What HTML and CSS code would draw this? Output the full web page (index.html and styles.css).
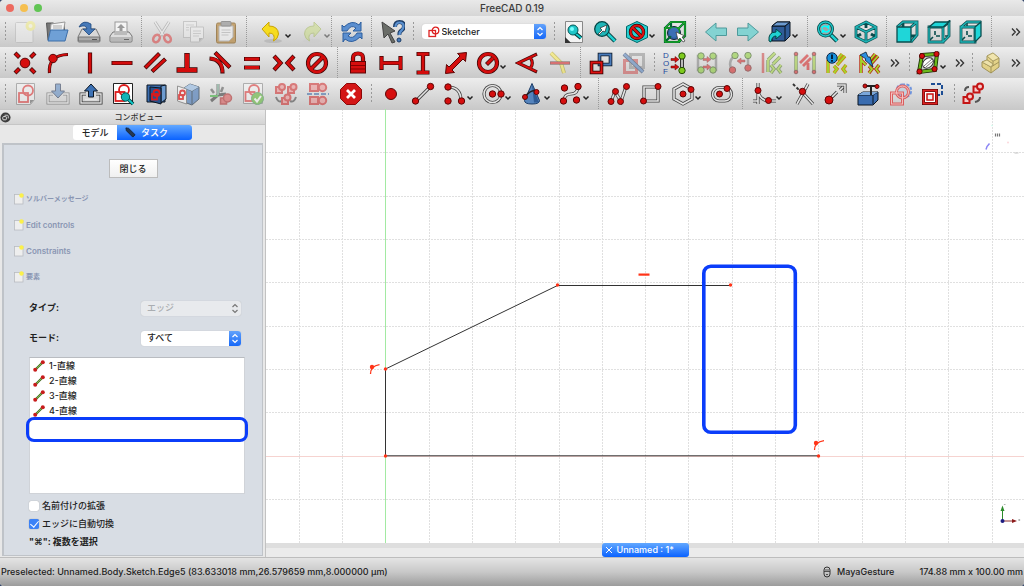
FILE: index.html
```html
<!DOCTYPE html>
<html lang="ja">
<head>
<meta charset="utf-8">
<title>FreeCAD 0.19</title>
<link rel="stylesheet" href="styles.css">
</head>
<body>
<svg class="sprite" aria-hidden="true">
  <symbol id="chev" viewBox="0 0 8 24"><path d="M1.500 14.500 4 17l2.500-2.500" fill="none" stroke="#222" stroke-width="1.500"/></symbol>
  <symbol id="more" viewBox="0 0 10 10"><path d="M1 1.500 4.300 5 1 8.500M5.300 1.500 8.600 5 5.300 8.500" fill="none" stroke="#333" stroke-width="1.300"/></symbol>
  <symbol id="step" viewBox="0 0 12 14"><path d="M3.500 5.500 6 3l2.500 2.500M3.500 8.500 6 11l2.500-2.500" fill="none" stroke="currentColor" stroke-width="1.200"/></symbol>
  <symbol id="page" viewBox="0 0 10 12"><rect x=".5" y="1.500" width="8.500" height="9.500" fill="#eee" stroke="#b9bcc0" stroke-width=".8"/><circle cx="7.500" cy="2.500" r="2.200" fill="#fbf04a"/></symbol>
  <symbol id="edge" viewBox="0 0 12 12"><path d="M2 10 10 2" stroke="#3f6b1c" stroke-width="2.200"/><path d="M2 10 10 2" stroke="#82b84a" stroke-width="1"/><circle cx="2.200" cy="9.800" r="2" fill="#c81c1c"/><circle cx="9.800" cy="2.200" r="2" fill="#c81c1c"/></symbol>
</svg>
<div class="window">
<header class="titlebar">
  <div class="lights"><span class="light close"></span><span class="light min"></span><span class="light max"></span></div>
  <h1 class="title">FreeCAD 0.19</h1>
</header>

<nav class="toolbar bar-file" aria-label="File and view">
  <div class="group grip">
    <button class="tool off" aria-label="New"><svg viewBox="0 0 24 24"><rect x="2.500" y="2.500" width="17.500" height="20" rx="1" fill="#f0f0f0" stroke="#b5b5b5"/><circle cx="17.500" cy="6" r="5" fill="#f5ef7a"/><circle cx="17.500" cy="6" r="2" fill="#fffde0"/></svg></button>
    <button class="tool" aria-label="Open"><svg viewBox="0 0 24 24"><path d="M1.500 3h7l1 2h10v15H3z" fill="#777" stroke="#555"/><path d="M6 4l14-2-2 12H5z" fill="#f4f4f4" stroke="#999"/><path d="M8 6h9M8 8h9" stroke="#aaa"/><path d="M5.500 10H23l-3 11H3z" fill="#6fa0d6" stroke="#3d6ea8"/></svg></button>
    <button class="tool" aria-label="Save"><svg viewBox="0 0 24 24"><path d="M5 9h14l4 8v4q0 1-1 1H2q-1 0-1-1v-4z" fill="#d8d8d8" stroke="#777"/><path d="M1.500 17h21v4h-21z" fill="#aaa" stroke="#777"/><path d="M15 19.500h5" stroke="#555"/><path d="M2 7Q6-1 14 4v5h4l-6 6-6-6h4Q9 4 2 7z" fill="#4679b8" stroke="#20497e" stroke-width=".8"/></svg></button>
    <button class="tool" aria-label="Print"><svg viewBox="0 0 24 24"><rect x="6" y="2" width="12" height="13" fill="#f4f4f4" stroke="#999"/><path d="M12 4l4 4h-2.500v5h-3V8H8z" fill="#999"/><path d="M4 12h16l3 4v5q0 1-1 1H2q-1 0-1-1v-5z" fill="#ddd" stroke="#777"/><path d="M6 11h12v4H5z" fill="#bbb"/><path d="M2 17h20v4H2z" fill="#b8b8b8"/><path d="M15 19.500h5" stroke="#666"/></svg></button>
  </div>
  <div class="group sep">
    <button class="tool off" aria-label="Cut"><svg viewBox="0 0 24 24"><path d="M5 2l9 14M19 2l-9 14" stroke="#888" stroke-width="3"/><path d="M5 2l9 14M19 2l-9 14" stroke="#eee" stroke-width="1.500"/><ellipse cx="6.500" cy="18.500" rx="3" ry="4" transform="rotate(35 6.500 18.500)" fill="none" stroke="#d33" stroke-width="2.500"/><ellipse cx="17.500" cy="18.500" rx="3" ry="4" transform="rotate(-35 17.500 18.500)" fill="none" stroke="#d33" stroke-width="2.500"/></svg></button>
    <button class="tool off" aria-label="Copy"><svg viewBox="0 0 24 24"><rect x="1.500" y="1.500" width="13" height="16" fill="#eee" stroke="#aaa"/><path d="M8.500 7h13v11l-4 4h-9z" fill="#f2f2f2" stroke="#aaa"/><path d="M11 11h8M11 13.500h8M11 16h6M4 5h8M4 7.500h3M4 10h3" stroke="#bbb"/><path d="M21 18h-4v4z" fill="#999"/></svg></button>
    <button class="tool dim" aria-label="Paste"><svg viewBox="0 0 24 24"><rect x="2.500" y="3" width="19" height="20" rx="1.500" fill="#b98d4a" stroke="#8a6428"/><path d="M5 6h14v11l-4 4H5z" fill="#eee" stroke="#aaa"/><path d="M7.500 10h9M7.500 12.500h9M7.500 15h7" stroke="#bbb"/><rect x="7" y="1.500" width="10" height="4.500" rx="1" fill="#999" stroke="#777"/></svg></button>
  </div>
  <div class="group sep late">
    <button class="tool menu" aria-label="Undo"><svg viewBox="0 0 24 24"><ellipse cx="12" cy="21" rx="9" ry="2" fill="#bbb"/><path d="M1 9l7-7v4q9 0 9.500 8-.5 5-5 7 2.500-8-4.500-8v4z" fill="#f6dc1e" stroke="#c9a406"/></svg><svg class="chev"><use href="#chev"/></svg></button>
    <button class="tool menu off" aria-label="Redo"><svg viewBox="0 0 24 24"><ellipse cx="12" cy="21" rx="9" ry="2" fill="#ccc"/><path d="M21 9l-7-7v4q-9 0-9.500 8 .5 5 5 7-2.500-8 4.500-8v4z" fill="#c8dc7c" stroke="#9fb552"/></svg><svg class="chev"><use href="#chev"/></svg></button>
  </div>
  <div class="group sep">
    <button class="tool" aria-label="Refresh"><svg viewBox="0 0 24 24"><path d="M2 11V5l2 2q8-8 15-2l2-3v9h-8l3-3q-5-4-9 3z" fill="#5b8fd0" stroke="#2d5e9e"/><path d="M22 13v6l-2-2q-8 8-15 2l-2 3v-9h8l-3 3q5 4 9-3z" fill="#5b8fd0" stroke="#2d5e9e"/></svg></button>
  </div>
  <div class="group sep">
    <button class="tool" aria-label="What's this?"><svg viewBox="0 0 24 24"><path d="M14 7q0-5 4.500-5T23 6q0 3-2.500 4.500T18.500 15" fill="none" stroke="#1c3c66" stroke-width="4"/><path d="M14.500 7q0-4.500 4-4.500T22.500 6q0 3-2 4.500T18.500 15" fill="none" stroke="#5b90cf" stroke-width="2.200"/><circle cx="18" cy="20" r="2" fill="#4679b8" stroke="#1c3c66"/><path d="M1 2l13 9-5 2 5 9-3 1-4-9-4 4z" fill="#6a6d68" stroke="#444"/></svg></button>
  </div>
  <div class="group grip">
    <label class="combo workbench"><svg class="combo-icon" viewBox="0 0 12 12"><rect x="1" y="4.500" width="6.500" height="6" fill="none" stroke="#d22" stroke-width="1.300"/><circle cx="7.500" cy="4.500" r="3.300" fill="none" stroke="#d22" stroke-width="1.300"/></svg><select aria-label="Workbench"><option>Sketcher</option></select><svg class="step"><use href="#step"/></svg></label>
  </div>
  <div class="group grip">
    <button class="tool" aria-label="Fit all"><svg viewBox="0 0 24 24"><path d="M3.500 1.500h17v21H8l-4.500-4z" fill="#f3f3f3" stroke="#888"/><path d="M3 17v6h6z" fill="#333"/><path d="M13 13l6 5" stroke="#033" stroke-width="4"/><path d="M13 13l6 5" stroke="#1cc" stroke-width="2"/><circle cx="11" cy="10" r="5" fill="#1fc6c8" stroke="#055"/><circle cx="10" cy="9" r="2" fill="#7ff"/></svg></button>
    <button class="tool" aria-label="Zoom to selection"><svg viewBox="0 0 24 24"><path d="M14 13l8 8" stroke="#033" stroke-width="4.500"/><path d="M14 13l8 8" stroke="#1fcfd0" stroke-width="2.500"/><circle cx="9" cy="9" r="7.300" fill="#1fb6b8" stroke="#044" stroke-width="1.300"/><path d="M5 14l4-4-2-2 7-3-2 7-2-1-4 4z" fill="#fff" stroke="#222" stroke-width=".7"/></svg></button>
    <button class="tool menu" aria-label="Draw style"><svg viewBox="0 0 24 24"><path d="M12 1.500l10.500 5v11l-10.500 5-10.500-5v-11z" fill="#27cfd1" stroke="#066"/><circle cx="12" cy="12" r="6.500" fill="none" stroke="#300" stroke-width="3.400"/><path d="M7.500 7.500l9 9" stroke="#300" stroke-width="3.400"/><circle cx="12" cy="12" r="6.500" fill="none" stroke="#d11" stroke-width="2.200"/><path d="M7.500 7.500l9 9" stroke="#d11" stroke-width="2.200"/></svg><svg class="chev"><use href="#chev"/></svg></button>
    <button class="tool" aria-label="Box selection"><svg viewBox="0 0 24 24"><circle cx="11" cy="13" r="6.500" fill="#2f62a8" stroke="#123"/><path d="M2 8h14v14H2zM2 8l6-6h14v14l-6 6M16 8l6-6M8 2v14h14M8 16l-6 6" fill="none" stroke="#063" stroke-width="2.200"/><path d="M2 8h14v14H2zM2 8l6-6h14v14l-6 6M16 8l6-6" fill="none" stroke="#2b2" stroke-width="1"/><circle cx="11" cy="12.500" r="5" fill="#3c6fb4"/><path d="M13 12l9 4-3 1 3 4-2 1-3-4-2 2z" fill="#fff" stroke="#333" stroke-width=".7"/></svg></button>
  </div>
  <div class="group sep">
    <button class="tool" aria-label="Back"><svg viewBox="0 0 24 24"><path d="M1.500 12L12 3v5h10.500v7.500H12v5.500z" fill="#83d3d2" stroke="#4e9a9b"/></svg></button>
    <button class="tool" aria-label="Forward"><svg viewBox="0 0 24 24"><path d="M22.500 12L12 3v5H1.500v7.500H12v5.500z" fill="#83d3d2" stroke="#4e9a9b"/></svg></button>
    <button class="tool menu" aria-label="Linked object"><svg viewBox="0 0 24 24"><path d="M4 6l5-4h13v14l-5 5H4z" fill="#2f5c98" stroke="#0b1521"/><path d="M4 6h13v15M17 6l5-4" fill="none" stroke="#0b1521"/><path d="M4 6l5-4h13l-5 4z" fill="#6d9bd0" stroke="#0b1521"/><path d="M1 21q-1-9 7-9V9l6 5-6 5v-3q-4 0-5 6z" fill="#1fd0d2" stroke="#044"/></svg><svg class="chev"><use href="#chev"/></svg></button>
  </div>
  <div class="group sep">
    <button class="tool menu" aria-label="Sync view"><svg viewBox="0 0 24 24"><path d="M14 14l7 7" stroke="#033" stroke-width="4.500"/><path d="M14 14l7 7" stroke="#1fcfd0" stroke-width="2.500"/><circle cx="9.500" cy="9" r="7" fill="#98a9a9" stroke="#044" stroke-width="3"/><circle cx="9.500" cy="9" r="7" fill="none" stroke="#1fc6c8" stroke-width="1.500"/><path d="M5.500 8q3-4 7 0V5M13.500 10q-3 4-7 0v3" fill="none" stroke="#0ff" stroke-width="1.600"/></svg><svg class="chev"><use href="#chev"/></svg></button>
    <button class="tool" aria-label="Isometric"><svg viewBox="0 0 24 24"><path class="t0" d="M12 2l10 5v10l-10 5-10-5V7zM2 7l10 5 10-5M12 12v10M12 2v6M2 17l5-3M22 17l-5-3"/><path class="t1" d="M12 2l10 5v10l-10 5-10-5V7zM2 7l10 5 10-5M12 12v10"/></svg></button>
  </div>
  <div class="group sep">
    <button class="tool" aria-label="Front"><svg viewBox="0 0 24 24"><path class="t0" d="M2 7l6-5h14v13l-6 7M8 2v5M16 7l6-5M16 16h5"/><path class="t1" d="M2 7l6-5h14v13l-6 7M16 7l6-5"/><path d="M2 7h14v15H2z" fill="#1fd6d8" stroke="#0a4d4e" stroke-width="1.300"/></svg></button>
    <button class="tool" aria-label="Top"><svg viewBox="0 0 24 24"><path class="t0" d="M2 7h14v15H2zM16 7l6-5v14l-6 6"/><path class="t2" d="M8 11v4M6 17l-3 3M9 16h4M18 16h3"/><path class="t1" d="M2 7h14v15H2zM22 2v14l-6 6"/><path d="M2 7l6-5h14l-6 5z" fill="#1fd6d8" stroke="#0a4d4e" stroke-width="1.300"/></svg></button>
    <button class="tool" aria-label="Right"><svg viewBox="0 0 24 24"><path class="t0" d="M2 7h14v15H2zM2 7l6-5h14"/><path class="t2" d="M8 3v3M8 11v4M6 17l-3 3M9 16h4"/><path class="t1" d="M2 7h14v15H2zM2 7l6-5h14"/><path d="M16 7l6-5v14l-6 6z" fill="#1fd6d8" stroke="#0a4d4e" stroke-width="1.300"/></svg></button>
  </div>
  <div class="group sep end"><button class="more" aria-label="More view tools"><svg><use href="#more"/></svg></button></div>
</nav>

<nav class="toolbar bar-constraints" aria-label="Constraints">
  <div class="group grip">
    <button class="tool" aria-label="Coincident"><svg viewBox="0 0 24 24"><path class="k0" d="M2 2l4.500 4.500M22 2l-4.500 4.500M2 22l4.500-4.500M22 22l-4.500-4.500"/><path class="k1" d="M2.500 2.500l3.500 3.500M21.500 2.500L18 6M2.500 21.500L6 18M21.500 21.500L18 18"/><circle class="dot" cx="12" cy="12" r="4.800"/></svg></button>
    <button class="tool" aria-label="Point on object"><svg viewBox="0 0 24 24"><path class="k0 thin" d="M3.500 22Q2 4 22 3.500"/><path class="k1 thin" d="M3.500 21.500Q2 4 21.500 3.500"/><circle class="dot" cx="7" cy="7.500" r="4.200"/></svg></button>
    <button class="tool" aria-label="Vertical"><svg viewBox="0 0 24 24"><path class="k0" d="M12 1.500v21"/><path class="k1" d="M12 2.300v19.400"/></svg></button>
    <button class="tool" aria-label="Horizontal"><svg viewBox="0 0 24 24"><path class="k0" d="M1.500 12h21"/><path class="k1" d="M2.300 12h19.400"/></svg></button>
    <button class="tool" aria-label="Parallel"><svg viewBox="0 0 24 24"><path class="k0" d="M2 17L16.500 2.500M9 20.500L22.500 8"/><path class="k1" d="M2.500 16.500L16 3M9.500 20L22 8.500"/></svg></button>
    <button class="tool" aria-label="Perpendicular"><svg viewBox="0 0 24 24"><path class="k0 wide" d="M12 2v16M1.500 19h21"/><path class="k1 wide" d="M12 2.800V19M2.300 19h19.400"/></svg></button>
    <button class="tool" aria-label="Tangent"><svg viewBox="0 0 24 24"><path class="k0" d="M7 1.500l15 15M1.500 7.500q13 1 13 15"/><path class="k1" d="M7.500 2l14 14M2.300 7.500q12.200 1 12.200 14"/></svg></button>
    <button class="tool" aria-label="Equal"><svg viewBox="0 0 24 24"><path class="k0" d="M4 8h16M4 16.500h16"/><path class="k1" d="M4.800 8h14.400M4.800 16.500h14.400"/></svg></button>
    <button class="tool" aria-label="Symmetric"><svg viewBox="0 0 24 24"><path class="k0" d="M2 5l6.500 7-6.500 7M22 5l-6.500 7 6.500 7"/><path class="k1" d="M2.500 5.500l6 6.500-6 6.500M21.500 5.500L15.500 12l6 6.500"/></svg></button>
    <button class="tool" aria-label="Block"><svg viewBox="0 0 24 24"><circle class="k0" cx="12" cy="12" r="9"/><path class="k0" d="M6 18L18 6"/><circle class="k1" cx="12" cy="12" r="9"/><path class="k1" d="M6 18L18 6"/></svg></button>
  </div>
  <div class="group sep">
    <button class="tool" aria-label="Lock"><svg viewBox="0 0 24 24"><path class="k0" d="M7 12V7q0-4.500 5-4.500T17 7v5"/><path class="k1" d="M7 12V7q0-4.500 5-4.500T17 7v5"/><rect class="dot" x="4.500" y="10.500" width="15" height="11.500"/><path d="M5 14.500h14M5 18h14" stroke="#800"/></svg></button>
    <button class="tool" aria-label="Horizontal distance"><svg viewBox="0 0 24 24"><path class="k0" d="M2.500 5v14M21.500 5v14M2 12h20"/><path class="k1" d="M2.500 5.800v12.400M21.500 5.800v12.400M2 12h20"/></svg></button>
    <button class="tool" aria-label="Vertical distance"><svg viewBox="0 0 24 24"><path class="k0" d="M5.500 3h13M5.500 21.500h13M12 3v18"/><path class="k1" d="M6.300 3h11.400M6.300 21.500h11.400M12 3v18"/></svg></button>
    <button class="tool" aria-label="Distance"><svg viewBox="0 0 24 24"><path class="dot" d="M22.500 1.500l-1 9-2.500-2.500L8 19l2.500 2.500-9 1 1-9L5 16 16 5l-2.500-2.500z"/></svg></button>
    <button class="tool menu" aria-label="Radius"><svg viewBox="0 0 24 24"><circle class="k0" cx="12" cy="12" r="9"/><path class="k0" d="M10.500 13.500L17 7"/><circle class="k1" cx="12" cy="12" r="9"/><path class="k1" d="M11 13l6-6"/></svg><svg class="chev"><use href="#chev"/></svg></button>
    <button class="tool" aria-label="Angle"><svg viewBox="0 0 24 24"><path class="k0 thin" d="M22 3L3 12l19 9M15.500 7q3.500 5 0 10"/><path class="k1 thin" d="M21.500 3.300L3 12l18.500 8.700M15.500 7q3.500 5 0 10"/></svg></button>
    <button class="tool off" aria-label="Refraction"><svg viewBox="0 0 24 24"><path d="M3 2l10 10 3 10" fill="none" stroke="#a90" stroke-width="4"/><path d="M3 2l10 10 3 10" fill="none" stroke="#fe4" stroke-width="2.500"/><path class="k0 thin" d="M2 12h20"/><path class="k1 thin" d="M2.500 12h19"/></svg></button>
  </div>
  <div class="group sep">
    <button class="tool" aria-label="Toggle driving"><svg viewBox="0 0 24 24"><path d="M10.500 3.500h11v10h-11z" fill="none" stroke="#0b1521" stroke-width="3.600"/><path d="M10.500 3.500h11v10h-11z" fill="none" stroke="#4a7dbd" stroke-width="2"/><path d="M2.500 11.500h10v10h-10z" fill="none" stroke="#280000" stroke-width="3.600"/><path d="M2.500 11.500h10v10h-10z" fill="none" stroke="#d11" stroke-width="2"/></svg></button>
    <button class="tool off" aria-label="Activate constraint"><svg viewBox="0 0 24 24"><path d="M8.500 3.500h13v13h-13z" fill="none" stroke="#888" stroke-width="3"/><path d="M2.500 9.500h12v12h-12z" fill="none" stroke="#c44" stroke-width="3"/><path d="M2 3l19 18" stroke="#124" stroke-width="4"/><path d="M2 3l19 18" stroke="#47b" stroke-width="2.500"/></svg></button>
  </div>
  <div class="group grip">
    <button class="tool" aria-label="Select DOF"><svg viewBox="0 0 24 24"><text class="dof" x="0" y="7">D</text><text class="dof" x="0" y="15">O</text><text class="dof" x="0" y="23">F</text><path d="M19 5v15" stroke="#333" stroke-width="4"/><path d="M19 5v15" stroke="#bbb" stroke-width="2"/><circle class="gd" cx="19" cy="5" r="3.200"/><circle class="gd" cx="19" cy="19.500" r="3.200"/><path class="arrow" d="M8 7.500h4V5.500l4 3-4 3V9.500H8zM8 15h4v-2l4 3-4 3v-2H8z"/></svg></button>
    <button class="tool off" aria-label="Close shape"><svg viewBox="0 0 24 24"><path d="M8 5H3v14h5M16 5h5v14h-5" fill="none" stroke="#777" stroke-width="2.500"/><circle class="gd" cx="6" cy="5" r="3.200"/><circle class="gd" cx="18" cy="5" r="3.200"/><circle class="gd" cx="6" cy="19" r="3.200"/><circle class="gd" cx="18" cy="19" r="3.200"/><path class="arrow" d="M8 7.500h4V5.500l4 3-4 3V9.500H8zM8 15h4v-2l4 3-4 3v-2H8z"/></svg></button>
    <button class="tool off" aria-label="Connect edges"><svg viewBox="0 0 24 24"><path d="M7 4q-8 7-3 15M20 5v12" fill="none" stroke="#777" stroke-width="2.500"/><circle class="gd" cx="7" cy="4.500" r="3.200"/><circle class="gd" cx="20" cy="4.500" r="3.200"/><circle class="dot" cx="4.500" cy="19" r="3.200"/><circle class="dot" cx="20" cy="17" r="3.200"/><path class="arrow" d="M17 9h-4V7l-4 3 4 3v-2h4z"/></svg></button>
    <button class="tool off" aria-label="Select constraints"><svg viewBox="0 0 24 24"><path d="M3 2v20" stroke="#c33" stroke-width="2.500"/><path class="y0" d="M8 9v12M8 9l7-7M13 13l7-7M11 14l3 4-3 4M21 14l-3 4 3 4"/><path class="y1" d="M8 9v12M8 9l7-7M13 13l7-7M11 14l3 4-3 4M21 14l-3 4 3 4"/></svg></button>
    <button class="tool off" aria-label="Select elements"><svg viewBox="0 0 24 24"><path class="y0" d="M3 3v18M21 3v18"/><path class="y1" d="M3 3v18M21 3v18"/><path class="k1" d="M7 12l8-8M10 15l8-8M15 12v7"/><circle class="dot" cx="3" cy="3" r="1.800"/><circle class="dot" cx="21" cy="3" r="1.800"/><circle class="dot" cx="3" cy="21" r="1.800"/><circle class="dot" cx="21" cy="21" r="1.800"/></svg></button>
    <button class="tool" aria-label="Redundant constraints"><svg viewBox="0 0 24 24"><path class="y2" d="M3 9v13M12 9l5-6M12 14l8-9M9 15l3 3-3 4M21 14l-3 4 3 4"/><path class="y1" d="M3 9v13M12 9l5-6M12 14l8-9M9 15l3 3-3 4M21 14l-3 4 3 4"/><circle cx="7" cy="7" r="5.200" fill="#1590dc" stroke="#124"/><path d="M7 3.500v4.500M7 9v1.800" stroke="#012" stroke-width="1.700"/></svg></button>
    <button class="tool" aria-label="Conflicting constraints"><svg viewBox="0 0 24 24"><path class="y3" d="M3 4v18M3 9l5 5M12 9l5-6M12 14l8-9M11 15l3 3-3 4M21 14l-3 4 3 4"/><path class="y1" d="M3 4v18M3 9l5 5M12 9l5-6M12 14l8-9M11 15l3 3-3 4M21 14l-3 4 3 4"/><path d="M2 4l6-3 2 5 2 0 3 10-8-7 1-1z" fill="#2b8fe0" stroke="#123" stroke-width=".8"/></svg></button>
    <button class="more" aria-label="More constraint tools"><svg><use href="#more"/></svg></button>
  </div>
  <div class="group grip">
    <button class="tool menu" aria-label="Internal geometry"><svg viewBox="0 0 24 24"><path d="M6 4l15-1-2 16-16 2z" fill="#ccc" stroke="#152a04" stroke-width="4"/><path d="M6 4l15-1-2 16-16 2z" fill="none" stroke="#6cb81c" stroke-width="2.400"/><ellipse cx="12" cy="12" rx="6" ry="4.500" transform="rotate(-40 12 12)" fill="#fff" stroke="#333"/><path d="M8 15l8-7M10 16l7-6" stroke="#777"/><circle class="dot" cx="6" cy="5" r="2.600"/><circle class="dot" cx="20.500" cy="3" r="2.600"/><circle class="dot" cx="18.500" cy="18" r="2.600"/><circle class="dot" cx="3.500" cy="20.500" r="2.600"/></svg><svg class="chev"><use href="#chev"/></svg></button>
    <button class="more" aria-label="More B-spline tools"><svg><use href="#more"/></svg></button>
  </div>
  <div class="group grip wide-gap">
    <button class="tool dim" aria-label="Part"><svg viewBox="0 0 24 24"><path d="M4 11l5-2V5l6-3 6 5v5l0 4-8 6-9-6z" fill="#e8d06a" stroke="#8c7a2a"/><path d="M4 11l9 5v6M13 16l8-5M9 5l6 5 6-3M15 10v5M9 9l6 4" fill="none" stroke="#8c7a2a"/><path d="M9 5l6-3 6 5-6 3zM4 11l5-2 6 4-2 3z" fill="#f6e69a" stroke="#8c7a2a" stroke-width=".7"/></svg></button>
    <button class="more" aria-label="More part tools"><svg><use href="#more"/></svg></button>
  </div>
</nav>

<nav class="toolbar bar-sketch" aria-label="Sketch">
  <div class="group grip">
    <button class="tool off" aria-label="New sketch"><svg viewBox="0 0 24 24"><path d="M2.500 1.500h18v16l-4 5h-14z" fill="#f5f5f5" stroke="#777"/><path d="M20 18h-4v4z" fill="#555"/><rect x="5" y="11" width="9" height="9" class="s"/><circle cx="14" cy="8.500" r="5" class="s"/></svg></button>
    <button class="tool off" aria-label="Edit sketch"><svg viewBox="0 0 24 24"><path d="M7 12H2v9h20v-9h-5" fill="none" stroke="#444" stroke-width="3"/><path d="M7 12H2v9h20v-9h-5" fill="none" stroke="#eee" stroke-width="1.400"/><path d="M9.500 2h5v7h4L12 16 5.500 9h4z" fill="#4a7dbd" stroke="#124"/></svg></button>
    <button class="tool" aria-label="Leave sketch"><svg viewBox="0 0 24 24"><path d="M7 12H2v9h20v-9h-5" fill="none" stroke="#333" stroke-width="3"/><path d="M7 12H2v9h20v-9h-5M6 17.500h12" fill="none" stroke="#e5e5e5" stroke-width="1.400"/><path d="M9.500 15h5V9h4L12 2 5.500 9h4z" fill="#3d72b5" stroke="#0b1521"/></svg></button>
    <button class="tool" aria-label="View sketch"><svg viewBox="0 0 24 24"><path d="M2.500 1.500h19v20h-19z" fill="#fff" stroke="#222"/><rect x="4.500" y="10" width="9" height="9" class="s"/><circle cx="13" cy="8" r="5" class="s"/><path d="M17 17l5 5" stroke="#033" stroke-width="3.500"/><path d="M17 17l5 5" stroke="#1cc" stroke-width="1.800"/><circle cx="14.500" cy="15" r="4.200" fill="#12b4b6" stroke="#055"/></svg></button>
    <button class="tool" aria-label="View section"><svg viewBox="0 0 24 24"><path d="M3 3h18v17H3z" fill="#3a6caf" stroke="#0b1521"/><path d="M17 4l5-1v14l-5 4z" fill="#6d9bd0" stroke="#0b1521"/><path d="M6 5l11 1v16L6 19z" fill="#28508a" stroke="#0b1521"/><rect x="8" y="12" width="5" height="5.500" class="s"/><circle cx="12.500" cy="11" r="3" class="s"/></svg></button>
    <button class="tool dim" aria-label="Map sketch"><svg viewBox="0 0 24 24"><path d="M8 6l6-4 9 3v12l-7 6-8-3z" fill="#5c86bd" stroke="#345"/><path d="M8 6l8 3 7-4M16 9v13" fill="none" stroke="#345"/><path d="M8 6l6-4 9 3-7 4z" fill="#9fc0e4"/><path d="M1.500 4l9 3v15l-9-3z" fill="#f3f3f3" stroke="#777"/><rect x="3" y="13" width="4" height="4" class="s"/><circle cx="6.500" cy="11" r="2.500" class="s"/></svg></button>
    <button class="tool off" aria-label="Reorient"><svg viewBox="0 0 24 24"><path d="M9 2v11l-7 6M9 13l8-1" fill="none" stroke="#222" stroke-width="3"/><path d="M9 2v11" stroke="#7b9" stroke-width="1.500"/><path d="M2 7l3 4M14 5l-2 5" stroke="#444" stroke-width="2.500"/><path d="M1 14l8 0" stroke="#2a2" stroke-width="2"/><rect x="11.500" y="16" width="6" height="6" fill="#d44" stroke="#a11" stroke-width="1.500"/><circle cx="18.500" cy="16" r="4" fill="#d44" stroke="#a11" stroke-width="1.500"/></svg></button>
    <button class="tool off" aria-label="Validate"><svg viewBox="0 0 24 24"><path d="M2.500 1.500h19v20h-19z" fill="#f8f8f8" stroke="#777"/><rect x="4.500" y="10" width="9" height="9" class="s"/><circle cx="13" cy="8" r="5" class="s"/><circle cx="16.500" cy="16.500" r="6" fill="#4db31a" stroke="#384"/><path d="M13.500 16.500l2.500 3 4-5.500" fill="none" stroke="#fff" stroke-width="2"/></svg></button>
    <button class="tool off" aria-label="Merge"><svg viewBox="0 0 24 24"><path d="M2 15q2 6 6 4M22 15q-2 6-6 4" fill="none" stroke="#333" stroke-width="2"/><g fill="#e88" stroke="#c11" stroke-width="2"><rect x="2" y="5" width="6" height="6"/><circle cx="8" cy="5" r="3"/><rect x="14" y="5" width="6" height="6"/><circle cx="19.500" cy="5" r="3"/><rect x="8" y="16" width="6" height="6"/><circle cx="13.500" cy="15.500" r="3"/></g></svg></button>
    <button class="tool off" aria-label="Mirror"><svg viewBox="0 0 24 24"><g fill="#e88" stroke="#c11" stroke-width="2"><rect x="4" y="2" width="8" height="7"/><circle cx="16.500" cy="5.500" r="3.700"/><rect x="4" y="15" width="8" height="7"/><circle cx="16.500" cy="18.500" r="3.700"/></g><path d="M1 12h22" stroke="#2a5ca0" stroke-width="1.800" stroke-dasharray="5 2"/></svg></button>
    <button class="tool" aria-label="Stop operation"><svg viewBox="0 0 24 24"><path d="M7.500 1.500h9l6 6v9l-6 6h-9l-6-6v-9z" fill="#d31616" stroke="#8c0808"/><path d="M8 8l8 8M16 8l-8 8" stroke="#fff" stroke-width="2.800"/></svg></button>
  </div>
  <div class="group grip">
    <button class="tool" aria-label="Point"><svg viewBox="0 0 24 24"><circle class="dot" cx="12" cy="12" r="5.500"/></svg></button>
    <button class="tool" aria-label="Line"><svg viewBox="0 0 24 24"><path class="w0" d="M4.500 19.500l15-15"/><path class="w1" d="M4.500 19.500l15-15"/><circle class="dot" cx="4.500" cy="19" r="3.200"/><circle class="dot" cx="19.500" cy="4.500" r="3.200"/></svg></button>
    <button class="tool menu" aria-label="Arc"><svg viewBox="0 0 24 24"><path class="w0" d="M5 5q13 0 13 14"/><path class="w1" d="M5 5q13 0 13 14"/><circle class="dot" cx="5" cy="5" r="3.200"/><circle class="dot" cx="5" cy="19" r="3.200"/><circle class="dot" cx="18.500" cy="19" r="3.200"/></svg><svg class="chev"><use href="#chev"/></svg></button>
    <button class="tool menu" aria-label="Circle"><svg viewBox="0 0 24 24"><circle class="w0" cx="11.500" cy="12" r="8.500"/><circle class="w1" cx="11.500" cy="12" r="8.500"/><circle class="dot" cx="11.500" cy="12" r="3.200"/><circle class="dot" cx="20" cy="12" r="3.200"/></svg><svg class="chev"><use href="#chev"/></svg></button>
    <button class="tool menu" aria-label="Conic"><svg viewBox="0 0 24 24"><path d="M12 1.500l7.500 17q0 3.500-7.500 3.500t-7.500-3.500z" fill="#5584bd" stroke="#1c3c66"/><path d="M12 2.500l2 18h5z" fill="#2e5a94"/><path d="M5 15q6-8 12-6" fill="none" stroke="#222" stroke-width="1.500"/><circle class="dot" cx="5" cy="15" r="2.500"/><circle class="dot" cx="16.500" cy="10" r="2.500"/></svg><svg class="chev"><use href="#chev"/></svg></button>
    <button class="tool menu" aria-label="B-spline"><svg viewBox="0 0 24 24"><path class="w0" d="M5 19q0-7 7-7t7-8"/><path class="w1" d="M5 19q0-7 7-7t7-8"/><circle class="dot" cx="5.500" cy="6" r="3.200"/><circle class="dot" cx="19" cy="4.500" r="3.200"/><circle class="dot" cx="4.500" cy="19" r="3.200"/><circle class="dot" cx="17.500" cy="18" r="3.200"/></svg><svg class="chev"><use href="#chev"/></svg></button>
  </div>
  <div class="group sep">
    <button class="tool" aria-label="Polyline"><svg viewBox="0 0 24 24"><path class="w0" d="M4 19.500l4-10 6 10 5-15"/><path class="w1" d="M4 19.500l4-10 6 10 5-15"/><circle class="dot" cx="4" cy="19.500" r="3"/><circle class="dot" cx="8.500" cy="9.500" r="3"/><circle class="dot" cx="13.500" cy="19.500" r="3"/><circle class="dot" cx="19.500" cy="4.500" r="3"/></svg></button>
    <button class="tool" aria-label="Rectangle"><svg viewBox="0 0 24 24"><path class="w0" d="M5 5h14v14H5z"/><path class="w1" d="M5 5h14v14H5z"/><circle class="dot" cx="19" cy="4.500" r="3"/><circle class="dot" cx="4.500" cy="19" r="3"/></svg></button>
    <button class="tool menu" aria-label="Polygon"><svg viewBox="0 0 24 24"><path class="w0" d="M12 2l9 5v10l-9 5-9-5V7z"/><path class="w1" d="M12 2l9 5v10l-9 5-9-5V7z"/><circle class="dot" cx="12" cy="12" r="3"/><circle class="dot" cx="20" cy="7.500" r="3"/></svg><svg class="chev"><use href="#chev"/></svg></button>
    <button class="tool" aria-label="Slot"><svg viewBox="0 0 24 24"><rect class="w0" x="2.500" y="5.500" width="19" height="13.500" rx="6.700"/><rect class="w1" x="2.500" y="5.500" width="19" height="13.500" rx="6.700"/><circle class="dot" cx="9.500" cy="12" r="3"/><circle class="dot" cx="17" cy="6.500" r="3"/></svg></button>
  </div>
  <div class="group sep">
    <button class="tool menu" aria-label="Fillet"><svg viewBox="0 0 24 24"><path class="w0" d="M6 1v21M1 19h5M6 9q2 9 10 10h8"/><path class="w1" d="M6 1v21M1 19h5M6 9q2 9 10 10h8"/><circle class="dot" cx="6" cy="8.500" r="3"/><circle class="dot" cx="16.500" cy="18.500" r="3"/></svg><svg class="chev"><use href="#chev"/></svg></button>
    <button class="tool" aria-label="Trim"><svg viewBox="0 0 24 24"><path class="w0" d="M17 2L6 22M11 10l11 12"/><path class="w1" d="M17 2L6 22M11 10l11 12"/><path d="M2 2l7 7" stroke="#333" stroke-width="2" stroke-dasharray="3 2"/><circle class="dot" cx="11.500" cy="9.500" r="3.200"/></svg></button>
    <button class="tool" aria-label="Extend"><svg viewBox="0 0 24 24"><path class="w0" d="M5 18l8-8M16 8l3-3M13 3h8v8"/><path class="w1" d="M5 18l8-8M16 8l3-3M13 3h8v8"/><circle class="dot" cx="5" cy="18" r="4"/></svg></button>
    <button class="tool" aria-label="External geometry"><svg viewBox="0 0 24 24"><path d="M2 13l5-3h15v8l-5 5H2z" fill="#3a6caf" stroke="#0b1521"/><path d="M2 13h15v9M17 13l5-3" fill="none" stroke="#0b1521"/><path d="M2 13l5-3h15l-5 3z" fill="#7ba7da"/><path d="M9 4h12M15 4v9" stroke="#222" stroke-width="2"/><circle class="dot" cx="9" cy="4" r="2"/><circle class="dot" cx="21" cy="4.500" r="2"/></svg></button>
    <button class="tool dim" aria-label="Carbon copy"><svg viewBox="0 0 24 24"><rect x="8" y="2.500" width="14" height="12" rx="5" fill="#bcd" stroke="#47d" stroke-width="2" stroke-dasharray="3 1.500"/><g fill="none" stroke="#d33" stroke-width="3"><rect x="2.500" y="11" width="11" height="11"/><circle cx="13.500" cy="10" r="6"/></g><g fill="none" stroke="#fbb" stroke-width="1"><rect x="2.500" y="11" width="11" height="11"/><circle cx="13.500" cy="10" r="6"/></g></svg></button>
    <button class="tool" aria-label="Construction mode"><svg viewBox="0 0 24 24"><path d="M10 2h11v11h-7" fill="none" stroke="#1c4d94" stroke-width="2" stroke-dasharray="4 2"/><rect x="2.500" y="8.500" width="13" height="13" fill="#fff" stroke="#300" stroke-width="3"/><rect x="2.500" y="8.500" width="13" height="13" fill="none" stroke="#d22" stroke-width="2"/><rect x="6" y="12" width="6" height="6" fill="#eee" stroke="#c11" stroke-width="1.500"/></svg></button>
  </div>
  <div class="group grip">
    <button class="tool" aria-label="Switch space"><svg viewBox="0 0 24 24"><g fill="#f4caca" stroke="#c41414" stroke-width="2"><rect x="12.500" y="4.500" width="6" height="6"/><circle cx="19" cy="4.500" r="3"/><rect x="2.500" y="15" width="6" height="6"/><circle cx="9" cy="14.500" r="3"/></g><path d="M4 9q0-4 4-4M19 15q0 4-5 5" fill="none" stroke="#555" stroke-width="2"/></svg></button>
  </div>
</nav>

<main class="work">
  <aside class="dock">
    <div class="dock-title"><button class="dock-close" aria-label="Close panel"><svg viewBox="0 0 12 12"><circle cx="6" cy="6" r="5.500" fill="#3d3d3d"/><rect x="3" y="5" width="4" height="3.500" rx="1" fill="none" stroke="#eee"/><path d="M5 3.500h3q1 0 1 1V7" fill="none" stroke="#ddd"/></svg></button><h2>コンボビュー</h2></div>
    <div class="tabs" role="tablist">
      <button class="tab" role="tab">モデル</button>
      <button class="tab current" role="tab" aria-selected="true"><svg viewBox="0 0 12 12"><path d="M1 1l3 .5 7 7-2.500 2.500-7-7z" fill="#26384f" stroke="#142238"/></svg>タスク</button>
    </div>
    <section class="panel">
      <button class="close-task">閉じる</button>
      <ul class="sections">
        <li><a href="#solver"><svg><use href="#page"/></svg>ソルバーメッセージ</a></li>
        <li><a href="#edit" lang="en"><svg><use href="#page"/></svg>Edit controls</a></li>
        <li><a href="#constraints" lang="en"><svg><use href="#page"/></svg>Constraints</a></li>
        <li><a href="#elements"><svg><use href="#page"/></svg>要素</a></li>
      </ul>
      <div class="elements">
        <div class="field"><label for="type">タイプ:</label><div class="combo disabled"><select id="type" disabled><option>エッジ</option></select><svg class="step"><use href="#step"/></svg></div></div>
        <div class="field"><label for="mode">モード:</label><div class="combo"><select id="mode"><option>すべて</option></select><svg class="step"><use href="#step"/></svg></div></div>
        <div class="list">
          <ul>
            <li><svg><use href="#edge"/></svg>1-直線</li>
            <li><svg><use href="#edge"/></svg>2-直線</li>
            <li><svg><use href="#edge"/></svg>3-直線</li>
            <li><svg><use href="#edge"/></svg>4-直線</li>
          </ul>
          <div class="highlight"></div>
        </div>
        <label class="check"><input type="checkbox">名前付けの拡張</label>
        <label class="check"><input type="checkbox" checked>エッジに自動切換</label>
        <p class="hint">"⌘": 複数を選択</p>
      </div>
    </section>
  </aside>
  <section class="view">
    <svg class="canvas" viewBox="266 109 758 434" preserveAspectRatio="xMinYMin slice" role="img" aria-label="Sketch">
      <path class="grid" d="M299.500 109v434M342.500 109v434M429.500 109v434M472.500 109v434M515.500 109v434M559.500 109v434M602.500 109v434M645.500 109v434M688.500 109v434M732.500 109v434M775.500 109v434M818.500 109v434M862.500 109v434M905.500 109v434M948.500 109v434M992.500 109v434M266 152.500h758M266 196.500h758M266 239.500h758M266 282.500h758M266 326.500h758M266 369.500h758M266 412.500h758M266 499.500h758"/>
      <path d="M266 109.500h758" stroke="#c9c9c9"/>
      <path d="M385.500 109v434" stroke="#a2eaa2"/>
      <path d="M266 456.500h758" stroke="#f6d3d0"/>
      <path d="M385.500 456V369L557.500 285.500H730.500M385.500 455.800H818.500" fill="none" stroke="#333"/>
      <g fill="#ff3418"><circle cx="385.500" cy="369" r="1.700"/><circle cx="557.500" cy="285" r="1.700"/><circle cx="730.500" cy="285" r="1.700"/><circle cx="385.500" cy="456" r="1.700"/><circle cx="818.500" cy="456" r="1.700"/><circle cx="372" cy="367" r="2.200"/><circle cx="816" cy="443" r="2.200"/><rect x="638.500" y="273.500" width="11" height="2.200"/></g>
      <path d="M370.500 374q0-8 9-9.300M814.500 450q0-8 9.500-9.300" fill="none" stroke="#ff3418" stroke-width="1.300"/>
      <rect x="703.800" y="266.200" width="91.500" height="166" rx="7" fill="none" stroke="#0b3dfa" stroke-width="3.600"/>
      <path d="M995.500 133.500v3M997.500 133.500v3M999.500 133.500v3" stroke="#777" stroke-width="1.200"/>
      <path d="M986 149.500l1-3 2.500-3" fill="none" stroke="#8b85f5" stroke-width="1.500"/>
      <circle cx="992" cy="125.500" r=".8" fill="#cfe"/><circle cx="1008" cy="142.500" r="1" fill="#fcd8dc"/><path d="M1014.500 153h4" stroke="#ccc" stroke-width="1.200"/>
      <path d="M1002.500 521v-10" stroke="#2c8c2c"/><path d="M1000.500 511l2-5.500 2 5.500z" fill="#2c8c2c"/>
      <path d="M1002.500 521h10" stroke="#8c2c2c"/><path d="M1012 519l5 2-5 2z" fill="#8c1c1c"/><circle cx="1002.500" cy="521" r="2" fill="#1c1c80"/>
      <path d="M1004 504l.7 1 .7-1M1018.500 519l1.500 2M1020 519l-1.500 2" stroke="#888" stroke-width=".6" fill="none"/>
    </svg>
    <div class="doc-tabs"><button class="doc-tab"><svg viewBox="0 0 8 8"><path d="M1 1l6 6M7 1L1 7" stroke="#fff" stroke-width="1"/></svg>Unnamed : 1*</button></div>
  </section>
</main>

<footer class="status">
  <span class="message">Preselected: Unnamed.Body.Sketch.Edge5 (83.633018 mm,26.579659 mm,8.000000 µm)</span>
  <button class="nav-style"><svg viewBox="0 0 8 12"><rect x="1" y="1" width="6" height="10" rx="3" fill="none" stroke="#333"/><path d="M1 5.500h6M3 3v2M5 3v2M3 8l1 1 1-1" fill="none" stroke="#333" stroke-width=".8"/></svg>MayaGesture</button>
  <span class="size">174.88 mm x 100.00 mm</span>
</footer>
</div>
</body>
</html>
```
FILE: styles.css
```css
* { box-sizing: border-box; }
body {
  margin: 0;
  background: #34466a;
  color: #222;
  font: 500 9px/12px Inter, "Noto Sans CJK JP", sans-serif;
}
button, select, input { font: inherit; color: inherit; margin: 0; padding: 0; }
button { border: 0; background: none; }
ul, h1, h2, p { margin: 0; padding: 0; list-style: none; font: inherit; }
svg { display: block; flex: none; }
.sprite { position: absolute; width: 0; height: 0; }

.window {
  display: flex;
  flex-direction: column;
  min-height: 100vh;
  border-radius: 4px;
  overflow: hidden;
  background: #e8e8e8;
}

/* Title bar */
.titlebar {
  display: grid;
  grid-template-columns: 1fr auto 1fr;
  align-items: center;
  height: 16px;
  background: linear-gradient(#e9e9e9, #d6d6d6);
}
.lights { display: flex; gap: 6px; padding-left: 6px; }
.light { width: 8px; height: 8px; border-radius: 50%; }
.light.close { background: #ed6a5f; }
.light.min { background: #f5bf4f; }
.light.max { background: #61c554; }
.title { font-size: 10px; color: #3c3c3c; }

/* Toolbars */
.toolbar {
  display: grid;
  height: 31px;
  padding-left: 5px;
  background: linear-gradient(#ededed, #c9c9c9);
}
.bar-file { grid-template-columns: 136fr 105fr 85fr 40fr 42fr 141fr 141fr 112fr 79fr 105fr 33fr; }
.bar-constraints { grid-template-columns: 332fr 243fr 74fr 255fr 63fr 52fr; }
.bar-sketch { grid-template-columns: 366fr 227fr 144fr 212fr 37fr 33fr; }
.group {
  display: flex;
  align-items: center;
  justify-content: space-evenly;
  min-width: 0;
  background-repeat: no-repeat;
  background-position: left center;
}
.group.sep { border-left: 1px dotted #999; }
.group.grip {
  background-image: repeating-linear-gradient(#999 0 2px, transparent 2px 4px);
  background-size: 1px 20px;
}
.group.late { justify-content: flex-end; gap: 8px; }
.group.end { justify-content: flex-end; padding-right: 3px; }
.group.wide-gap { justify-content: space-between; padding: 0 3px 0 6px; }
.tool { display: flex; width: 24px; height: 24px; }
.tool.menu { width: 31px; }
.tool svg { width: 24px; height: 24px; }
.tool .chev { width: 8px; margin-left: -1px; }
.tool.off { opacity: .5; }
.tool.dim { opacity: .72; }
.more svg { width: 10px; height: 10px; }

.k0, .k1 { fill: none; }
.k0 { stroke: #3b0808; stroke-width: 4.2; }
.k1 { stroke: #d40c0c; stroke-width: 2.8; }
.k0.thin { stroke-width: 3.2; }
.k1.thin { stroke-width: 2; }
.k0.wide { stroke-width: 5.4; }
.k1.wide { stroke-width: 4; }
.dot { fill: #d60e0e; stroke: #5c0606; stroke-width: 1; }
.arrow { fill: #d60e0e; stroke: #5c0606; stroke-width: .5; }
.gd { fill: #7fcb1e; stroke: #234a06; stroke-width: 1; }
.w0 { fill: none; stroke: #444; stroke-width: 3.2; }
.w1 { fill: none; stroke: #e4e4e4; stroke-width: 1.6; }
.t0 { fill: none; stroke: #0a4d4e; stroke-width: 2.8; }
.t1 { fill: none; stroke: #1fb4b6; stroke-width: 1.4; }
.t2 { fill: none; stroke: #0a4d4e; stroke-width: 1.6; }
.y0, .y1, .y2, .y3 { fill: none; stroke-width: 3.4; }
.y0 { stroke: #3f6b10; }
.y1 { stroke: #a3d82c; stroke-width: 1.8; }
.y2 { stroke: #c88a10; }
.y3 { stroke: #b82c10; }
.s { fill: none; stroke: #dc1a1a; stroke-width: 1.8; }
.dof { font: 400 8px/8px "Liberation Sans", sans-serif; fill: #24479c; }

/* Drop-downs */
.combo {
  display: flex;
  align-items: center;
  width: 100px;
  height: 15px;
  border-radius: 3px;
  background: #fff;
  box-shadow: 0 0 1px #8888;
  overflow: hidden;
}
.combo select {
  flex: 1;
  min-width: 0;
  height: 15px;
  padding-left: 6px;
  border: 0;
  background: none;
  appearance: none;
  color: #222;
  opacity: 1;
}
.step { width: 12px; height: 15px; color: #fff; background: linear-gradient(#62a2fb, #1668f8); }
.combo.workbench { width: 124px; }
.combo.workbench select { padding-left: 2px; }
.combo-icon { width: 12px; height: 12px; margin-left: 6px; }
.combo.disabled { background: #e8eaed; }
.combo.disabled select { color: #aaadb1; }
.combo.disabled .step { color: #777; background: none; }

/* Combo view */
.work { display: flex; flex: 1; }
.dock {
  display: flex;
  flex-direction: column;
  flex: 0 0 266px;
  padding: 0 2px 1px;
  border-top: 1px solid #c4c4c4;
  border-right: 1px solid #c2c2c2;
  background: #e8e8e8;
}
.dock-title {
  display: grid;
  grid-template-columns: 1fr auto 1fr;
  align-items: center;
  height: 15px;
  margin: 0 -2px;
  border-bottom: 1px solid #c6c6c6;
  background: linear-gradient(#e9e9e9, #d4d4d4);
}
.dock-title h2 { padding-left: 12px; font-size: 8px; color: #333; }
.dock-close { justify-self: start; }
.dock-close svg { width: 11px; height: 11px; }
.tabs { display: flex; justify-content: center; height: 18px; }
.tab {
  width: 44px;
  height: 15px;
  border-radius: 3px 0 0 3px;
  background: #fff;
}
.tab.current {
  display: flex;
  align-items: center;
  gap: 5px;
  width: 75px;
  padding-left: 8px;
  border-radius: 0 3px 3px 0;
  color: #fff;
  background: linear-gradient(#62a8ff, #0a62ff);
}
.tab svg { width: 11px; height: 11px; }
.panel {
  flex: 1;
  padding: 14px 10px 0;
  border: 2px solid #bfc3c8;
  border-width: 2px 1px 1px 2px;
  background: #d8dde4;
}
.close-task {
  display: block;
  width: 49px;
  height: 19px;
  margin: 0 auto;
  border: 1px solid #bcbcbc;
  background: linear-gradient(#fff, #f0f0f0);
}
.sections { padding-top: 8px; font-size: 7px; font-weight: 700; }
.sections a {
  display: flex;
  align-items: center;
  gap: 2px;
  height: 26px;
  color: #8a96b3;
  text-decoration: none;
}
.sections a:lang(en) { font-size: 8px; font-weight: 600; }
.sections svg { width: 10px; height: 12px; }
.elements { padding: 3px 7px 0 15px; }
.field { display: flex; align-items: center; justify-content: space-between; height: 30px; padding-right: 4px; font-weight: 700; }
.field select { font-weight: 500; }
.list {
  position: relative;
  height: 137px;
  margin-top: 4px;
  border: 1px solid #d0d3d8;
  border-top-color: #b9bcc1;
  background: #fff;
}
.list li { display: flex; align-items: center; gap: 4px; height: 15px; padding-left: 3px; }
.list li svg { width: 12px; height: 12px; }
.highlight {
  position: absolute;
  inset: 59px -4px auto;
  height: 25px;
  border: 3px solid #0b3dfa;
  border-radius: 8px;
}
.check { display: flex; align-items: center; gap: 3px; height: 18px; }
.list + .check { margin-top: 3px; }
.check input {
  width: 10px;
  height: 10px;
  border-radius: 2px;
  background: #fff;
  box-shadow: 0 0 1px #888;
  appearance: none;
}
.check input:checked { background: #3b82f7; }
.check input:checked::before {
  content: "";
  display: block;
  width: 4px;
  height: 7px;
  margin: 0 0 0 3px;
  border: solid #fff;
  border-width: 0 1px 1px 0;
  transform: rotate(40deg);
}
.hint { height: 18px; line-height: 18px; font-weight: 700; }

/* 3D view */
.view { display: flex; flex-direction: column; flex: 1; min-width: 0; }
.canvas { flex: 1 1 0; width: 100%; min-height: 0; background: #fff; }
.grid { fill: none; stroke: #e0e0e0; stroke-dasharray: 2 1; }
.doc-tabs {
  display: flex;
  justify-content: center;
  height: 14px;
  background: linear-gradient(#dedede 0 5px, #ebebeb 5px);
}
.doc-tab {
  display: flex;
  align-items: center;
  gap: 4px;
  width: 87px;
  padding-left: 3px;
  border-radius: 3px;
  color: #fff;
  background: linear-gradient(#62a8ff, #0a62ff);
}
.doc-tab svg { width: 8px; height: 8px; }

/* Status bar */
.status {
  display: flex;
  align-items: center;
  height: 29px;
  padding: 0 1px;
  border-top: 1px solid #bdbdbd;
  background: linear-gradient(#e4e4e4, #c8c8c8 50%, #9c9c9c);
  color: #1c1c1c;
}
.message { flex: 1; }
.nav-style { display: flex; align-items: center; gap: 6px; margin-right: 25px; }
.nav-style svg { width: 8px; height: 12px; }
```
